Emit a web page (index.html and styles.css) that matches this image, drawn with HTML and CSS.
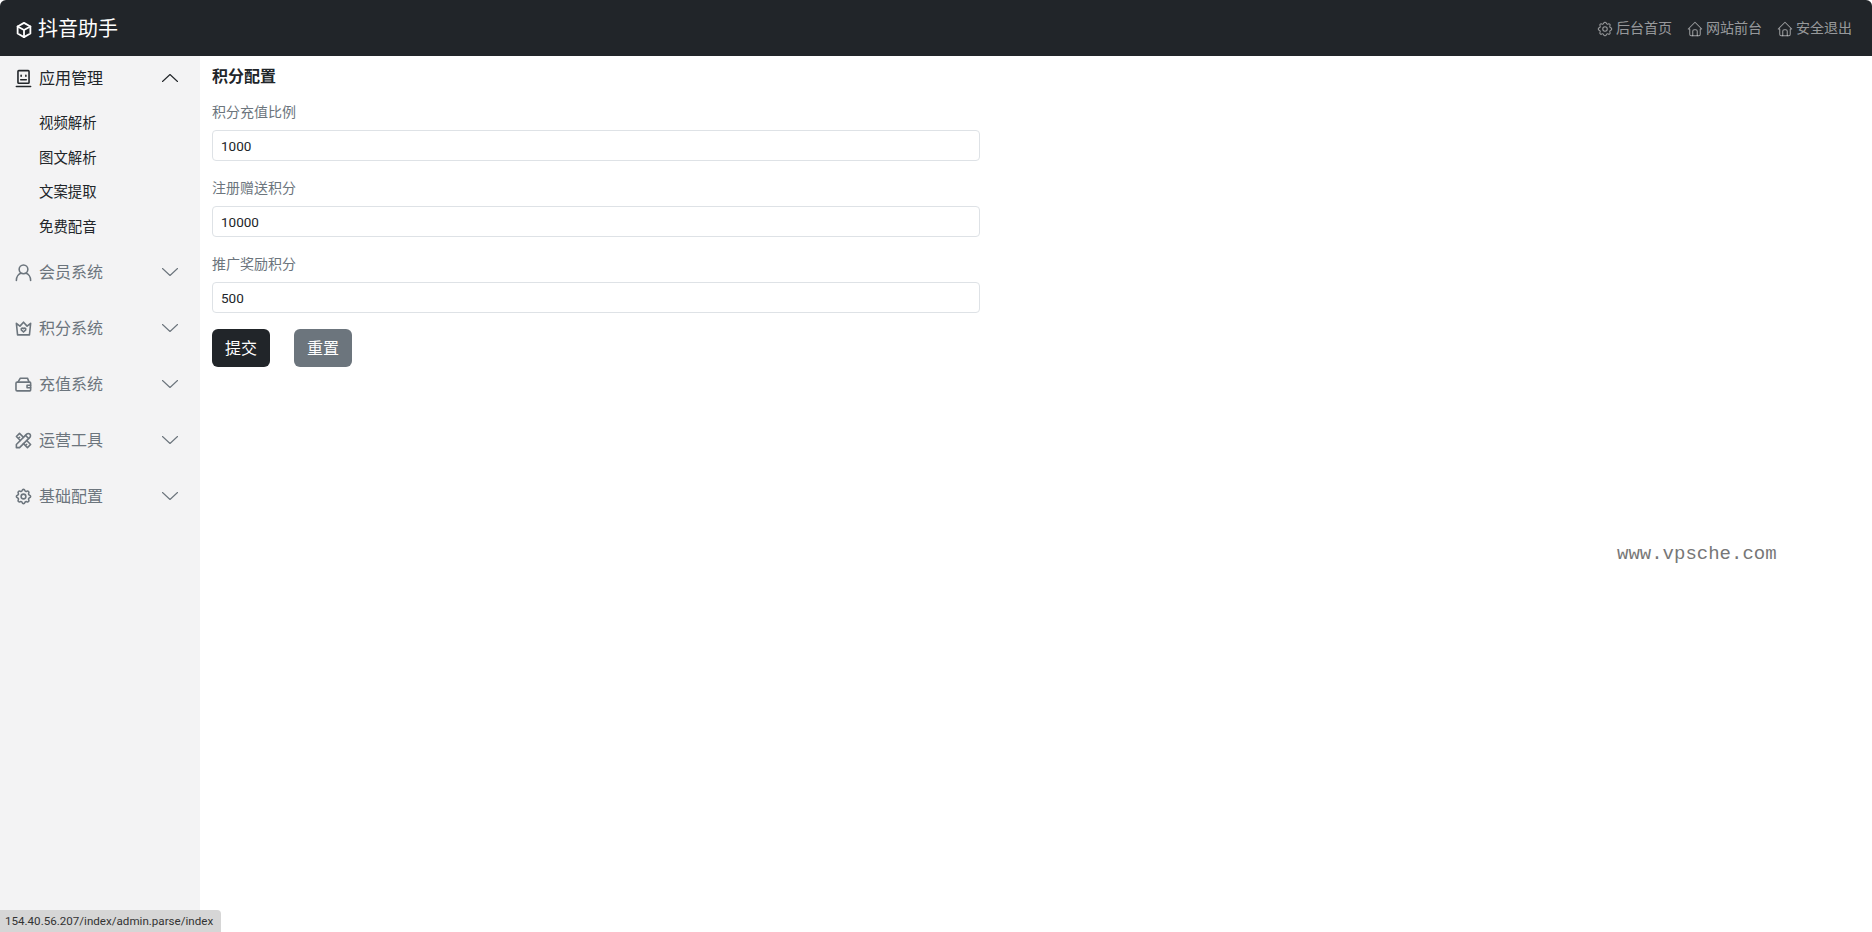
FILE: index.html
```html
<!DOCTYPE html>
<html lang="zh">
    <head>
        <meta charset="utf-8">
        <title>抖音助手</title>
        <link rel="stylesheet" href="styles.css">
    </head>
    <body>
        <svg class="icon-defs" xmlns="http://www.w3.org/2000/svg">
            <symbol id="i-box" viewBox="0 0 24 24">
                <path d="M12 2.5l8.5 4.8v9.4L12 21.5l-8.5-4.8V7.300z"/>
                <path d="M3.500 7.300L12 12l8.500-4.700M12 12v9.500"/>
            </symbol>
            <symbol id="i-face" viewBox="0 0 24 24">
                <rect x="5" y="2" width="14" height="16" rx="1"/>
                <path d="M3 22h18M8.500 13.500h7"/>
                <path d="M9 8v1M15 8v1"/>
            </symbol>
            <symbol id="i-user" viewBox="0 0 24 24">
                <circle cx="12" cy="8" r="5.500"/>
                <path d="M3 22c0-4.500 3-8 5.500-9M21 22c0-4.500-3-8-5.500-9"/>
            </symbol>
            <symbol id="i-crown" viewBox="0 0 24 24">
                <path d="M12 4l4.500 5L21 5.500 19.500 20h-15L3 5.500 7.500 9z"/>
                <path d="M12 16.500l-2.800-2.800a1.600 1.600 0 0 1 2.800-1.500 1.600 1.600 0 0 1 2.800 1.500z"/>
            </symbol>
            <symbol id="i-wallet" viewBox="0 0 24 24">
                <path d="M5 9l3-5h9l2 5"/>
                <path d="M4 9h16a1 1 0 0 1 1 1v9a1 1 0 0 1-1 1H4a1.500 1.500 0 0 1-1.500-1.500v-8A1.500 1.500 0 0 1 4 9z"/>
                <path d="M21 13h-4.500v3H21"/>
            </symbol>
            <symbol id="i-tools" viewBox="0 0 24 24">
                <path d="M3 21h4L20 8a1.500 1.500 0 0 0-4-4L3 17v4"/>
                <path d="M14.500 5.500l4 4M12 8L7 3 3 7l5 5M7 8L5.500 9.500M16 12l5 5-4 4-5-5M16 17l-1.500 1.500"/>
            </symbol>
            <symbol id="i-gear" viewBox="0 0 24 24">
                <path d="M10.325 4.317c.426-1.756 2.924-1.756 3.350 0a1.724 1.724 0 0 0 2.573 1.066c1.543-.94 3.310.826 2.370 2.370a1.724 1.724 0 0 0 1.065 2.572c1.756.426 1.756 2.924 0 3.350a1.724 1.724 0 0 0-1.066 2.573c.94 1.543-.826 3.310-2.370 2.370a1.724 1.724 0 0 0-2.572 1.065c-.426 1.756-2.924 1.756-3.350 0a1.724 1.724 0 0 0-2.573-1.066c-1.543.94-3.310-.826-2.370-2.370a1.724 1.724 0 0 0-1.065-2.572c-1.756-.426-1.756-2.924 0-3.350a1.724 1.724 0 0 0 1.066-2.573c-.94-1.543.826-3.310 2.370-2.370c1 .608 2.296.07 2.572-1.065z"/>
                <circle cx="12" cy="12" r="3"/>
            </symbol>
            <symbol id="i-home" viewBox="0 0 24 24">
                <path d="M5 12H3l9-9 9 9h-2M5 12v7a2 2 0 0 0 2 2h10a2 2 0 0 0 2-2v-7"/>
                <path d="M9 21v-6a2 2 0 0 1 2-2h2a2 2 0 0 1 2 2v6"/>
            </symbol>
            <symbol id="i-up" viewBox="0 0 16 8"><path d="M.5 7.500L8 .5l7.500 7"/></symbol>
            <symbol id="i-down" viewBox="0 0 16 8"><path d="M.5 .5L8 7.500l7.500-7"/></symbol>
        </svg>

        <header class="topbar">
            <a class="brand">
                <svg class="brand-icon"><use href="#i-box"/></svg>
                <span>抖音助手</span>
            </a>
            <nav class="top-links">
                <a class="top-link"><svg class="top-icon"><use href="#i-gear"/></svg>后台首页</a>
                <a class="top-link"><svg class="top-icon"><use href="#i-home"/></svg>网站前台</a>
                <a class="top-link"><svg class="top-icon"><use href="#i-home"/></svg>安全退出</a>
            </nav>
        </header>

        <div class="page">
            <aside class="sidebar">
                <div class="menu-group open">
                    <div class="menu-head">
                        <svg class="menu-icon"><use href="#i-face"/></svg>
                        <span class="menu-title">应用管理</span>
                        <svg class="chevron"><use href="#i-up"/></svg>
                    </div>
                    <ul class="submenu">
                        <li>视频解析</li>
                        <li>图文解析</li>
                        <li>文案提取</li>
                        <li>免费配音</li>
                    </ul>
                </div>
                <div class="menu-group">
                    <div class="menu-head">
                        <svg class="menu-icon"><use href="#i-user"/></svg>
                        <span class="menu-title">会员系统</span>
                        <svg class="chevron"><use href="#i-down"/></svg>
                    </div>
                </div>
                <div class="menu-group">
                    <div class="menu-head">
                        <svg class="menu-icon"><use href="#i-crown"/></svg>
                        <span class="menu-title">积分系统</span>
                        <svg class="chevron"><use href="#i-down"/></svg>
                    </div>
                </div>
                <div class="menu-group">
                    <div class="menu-head">
                        <svg class="menu-icon"><use href="#i-wallet"/></svg>
                        <span class="menu-title">充值系统</span>
                        <svg class="chevron"><use href="#i-down"/></svg>
                    </div>
                </div>
                <div class="menu-group">
                    <div class="menu-head">
                        <svg class="menu-icon"><use href="#i-tools"/></svg>
                        <span class="menu-title">运营工具</span>
                        <svg class="chevron"><use href="#i-down"/></svg>
                    </div>
                </div>
                <div class="menu-group">
                    <div class="menu-head">
                        <svg class="menu-icon"><use href="#i-gear"/></svg>
                        <span class="menu-title">基础配置</span>
                        <svg class="chevron"><use href="#i-down"/></svg>
                    </div>
                </div>
            </aside>

            <main class="content">
                <h1 class="page-title">积分配置</h1>
                <form class="config-form">
                    <div class="field">
                        <label class="field-label">积分充值比例</label>
                        <input class="field-input" type="text" value="1000">
                    </div>
                    <div class="field">
                        <label class="field-label">注册赠送积分</label>
                        <input class="field-input" type="text" value="10000">
                    </div>
                    <div class="field">
                        <label class="field-label">推广奖励积分</label>
                        <input class="field-input" type="text" value="500">
                    </div>
                    <div class="form-actions">
                        <button class="btn btn-dark" type="button">提交</button>
                        <button class="btn btn-gray" type="button">重置</button>
                    </div>
                </form>
            </main>
        </div>

        <div class="watermark">www.vpsche.com</div>
        <div class="status-tip">154.40.56.207/index/admin.parse/index</div>
    </body>
</html>
```

FILE: styles.css
```css
* {
    box-sizing: border-box;
}
html, body {
    height: 100%;
}
body {
    margin: 0;
    display: flex;
    flex-direction: column;
    overflow: hidden;
    background-color: #fff;
    color: #212529;
    font-family: "Roboto", "Noto Sans CJK SC", sans-serif;
    font-size: 14px;
}
svg {
    fill: none;
    stroke: currentColor;
    stroke-linecap: round;
    stroke-linejoin: round;
    flex: none;
}
.icon-defs {
    width: 0;
    height: 0;
    position: absolute;
}

.topbar {
    height: 56px;
    flex: none;
    display: flex;
    align-items: center;
    justify-content: space-between;
    padding: 0 20px 0 15px;
    background-color: #212529;
    border-radius: 6px 6px 0 0;
}
.brand {
    display: flex;
    align-items: center;
    gap: 5px;
    color: #fff;
    font-size: 20px;
    line-height: 30px;
    padding-top: 2px;
}
.brand-icon {
    width: 18px;
    height: 18px;
    margin-top: 1px;
    stroke-width: 2.400;
}
.top-links {
    display: flex;
    gap: 14px;
    padding-top: 1px;
}
.top-link {
    display: flex;
    align-items: center;
    gap: 2px;
    color: rgba(255, 255, 255, .55);
    line-height: 21px;
}
.top-icon {
    width: 18px;
    height: 18px;
    stroke-width: 1.400;
}

.page {
    flex: 1;
    display: flex;
    min-height: 0;
}
.sidebar {
    width: 200px;
    flex: none;
    background-color: #f3f3f4;
}
.menu-head {
    height: 56px;
    display: flex;
    align-items: center;
    padding: 0 22px 0 14px;
    color: #6c757d;
    font-size: 16px;
}
.open .menu-head {
    height: 44px;
    color: #212529;
}
.menu-icon {
    width: 19px;
    height: 19px;
    margin-right: 6px;
    stroke-width: 2;
}
.menu-title {
    flex: 1;
    line-height: 24px;
    padding-top: 2px;
}
.chevron {
    width: 16px;
    height: 8px;
    stroke-width: 1.100;
    overflow: visible;
}
.submenu {
    list-style: none;
    margin: 0;
    padding: 6px 0 0 39px;
    color: #212529;
    font-size: 14.400px;
}
.submenu li {
    height: 34.500px;
    line-height: 36.500px;
}

.content {
    flex: 1;
    padding: 9px 12px 0;
}
.page-title {
    margin: 0 0 12px;
    font-size: 16px;
    font-weight: 700;
    line-height: 24px;
}
.config-form {
    width: 768px;
}
.field {
    margin-bottom: 16px;
}
.field-label {
    display: block;
    padding-top: 1px;
    margin-bottom: 7px;
    color: #6c757d;
    line-height: 21px;
}
.field-input {
    display: block;
    width: 100%;
    height: 31px;
    padding: 0 8px;
    border: 1px solid #dee2e6;
    border-radius: 4px;
    background-color: #fff;
    color: #212529;
    font-family: inherit;
    font-size: 13.500px;
}
.form-actions {
    display: flex;
    gap: 24px;
}
.btn {
    width: 58px;
    height: 38px;
    padding: 0 0 2px;
    border: 0;
    border-radius: 6px;
    color: #fff;
    font-family: inherit;
    font-size: 16px;
}
.btn-dark {
    background-color: #212529;
}
.btn-gray {
    background-color: #6c757d;
}

.watermark {
    position: absolute;
    left: 1617px;
    top: 543px;
    color: #777;
    font-family: "Liberation Mono", monospace;
    font-size: 19px;
    line-height: 22px;
}
.status-tip {
    position: absolute;
    left: 0;
    bottom: 0;
    height: 22px;
    padding: 0 8px 0 5px;
    background-color: #d6d6d6;
    border-top-right-radius: 4px;
    color: #333;
    font-size: 11.600px;
    line-height: 22px;
}
```
